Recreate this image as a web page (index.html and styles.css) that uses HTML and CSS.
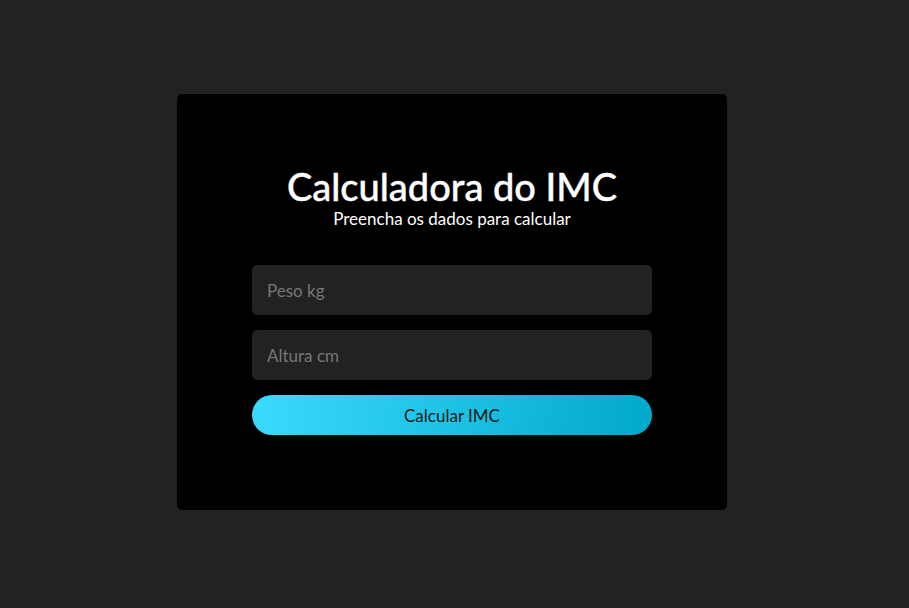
FILE: index.html
```html
<!DOCTYPE html>
<html lang="pt-BR">
<head>
<meta charset="utf-8">
<title>Calculadora do IMC</title>
<link rel="stylesheet" href="styles.css">
</head>
<body>
  <main class="card">
    <header class="heading">
      <h1 class="title">Calculadora do IMC</h1>
      <p class="subtitle">Preencha os dados para calcular</p>
    </header>
    <form class="form">
      <input class="field" type="text" placeholder="Peso kg">
      <input class="field" type="text" placeholder="Altura cm">
      <button class="btn" type="button">Calcular IMC</button>
    </form>
  </main>
</body>
</html>
```

FILE: styles.css
```css
* { box-sizing: border-box; }
html, body { height: 100%; }
body {
  margin: 0;
  background: #222222;
  font-family: "Lato", "Open Sans", sans-serif;
  display: flex;
  align-items: center;
  justify-content: center;
  padding: 0 5px 4px 0;
}
.card {
  width: 550px;
  height: 416px;
  background: #000000;
  border-radius: 5px;
  display: flex;
  flex-direction: column;
  align-items: center;
  padding-top: 70px;
}
.heading {
  text-align: center;
  color: #ffffff;
}
.title {
  margin: 0;
  font-size: 38px;
  font-weight: 500;
  line-height: 44px;
  -webkit-text-stroke: 0.4px #ffffff;
}
.subtitle {
  margin: 1px 0 0;
  font-size: 17px;
  line-height: 20px;
}
.form {
  margin-top: 36px;
  width: 400px;
  display: flex;
  flex-direction: column;
  gap: 15px;
}
.field {
  height: 50px;
  border: none;
  border-radius: 5px;
  background: #222222;
  padding: 0 15px;
  font-family: inherit;
  font-size: 17px;
  color: #ffffff;
  outline: none;
}
.field::placeholder { color: #777777; }
.btn {
  height: 40px;
  border: none;
  border-radius: 20px;
  background: linear-gradient(100deg, #3adbfc 0%, #00a8cc 100%);
  font-family: inherit;
  font-size: 17px;
  color: #1a1a1a;
  cursor: pointer;
}
```
